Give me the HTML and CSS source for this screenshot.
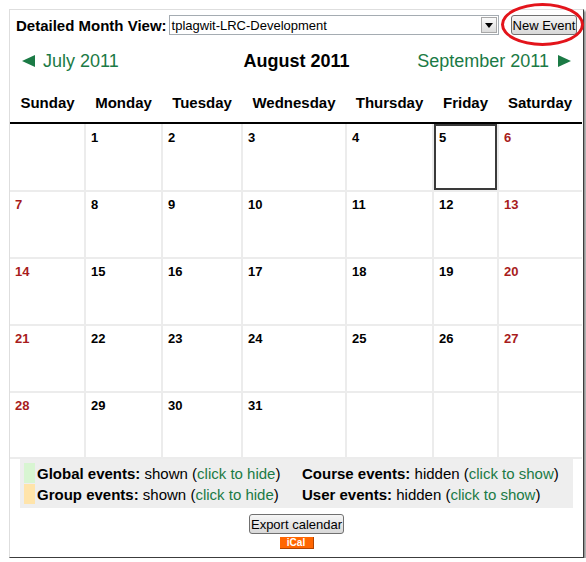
FILE: index.html
```html
<!DOCTYPE html>
<html>
<head>
<meta charset="utf-8">
<title>Calendar</title>
<link rel="stylesheet" href="styles.css">
</head>
<body>
<div class="frame">
  <div class="topbar">
    <span class="label">Detailed Month View:</span>
    <div class="select">
      <span class="select-text">tplagwit-LRC-Development</span>
      <span class="select-btn"><svg width="8" height="5" viewBox="0 0 8 5"><polygon points="0,0 8,0 4,5" fill="#000"/></svg></span>
    </div>
    <button class="btn new-event">New Event</button>
    <span class="annot"></span>
  </div>
  <div class="nav">
    <a class="prev" href="#"><svg width="13" height="12" viewBox="0 0 13 12"><polygon points="0,6 13,0 13,12" fill="#1b7a45"/></svg>July 2011</a>
    <h2 class="current">August 2011</h2>
    <a class="next" href="#">September 2011<svg width="13" height="12" viewBox="0 0 13 12"><polygon points="13,6 0,0 0,12" fill="#1b7a45"/></svg></a>
  </div>
  <table class="cal">
    <colgroup>
      <col class="c1"><col class="c2"><col class="c3"><col class="c4"><col class="c5"><col class="c6"><col class="c7">
    </colgroup>
    <thead>
      <tr><th>Sunday</th><th>Monday</th><th>Tuesday</th><th>Wednesday</th><th>Thursday</th><th>Friday</th><th>Saturday</th></tr>
    </thead>
    <tbody>
      <tr class="first"><td></td><td>1</td><td>2</td><td>3</td><td>4</td><td class="today">5</td><td class="we">6</td></tr>
      <tr><td class="we">7</td><td>8</td><td>9</td><td>10</td><td>11</td><td>12</td><td class="we">13</td></tr>
      <tr><td class="we">14</td><td>15</td><td>16</td><td>17</td><td>18</td><td>19</td><td class="we">20</td></tr>
      <tr><td class="we">21</td><td>22</td><td>23</td><td>24</td><td>25</td><td>26</td><td class="we">27</td></tr>
      <tr class="last"><td class="we">28</td><td>29</td><td>30</td><td>31</td><td></td><td></td><td></td></tr>
    </tbody>
  </table>
  <div class="legend">
    <div class="item"><span class="swatch global"></span><b>Global events:</b>&nbsp;shown (<a href="#">click to hide</a>)</div>
    <div class="item"><b>Course events:</b>&nbsp;hidden (<a href="#">click to show</a>)</div>
    <div class="item"><span class="swatch group"></span><b>Group events:</b>&nbsp;shown (<a href="#">click to hide</a>)</div>
    <div class="item"><b>User events:</b>&nbsp;hidden (<a href="#">click to show</a>)</div>
  </div>
  <div class="export">
    <button class="btn export-btn">Export calendar</button>
    <span class="ical">iCal</span>
  </div>
</div>
</body>
</html>
```

FILE: styles.css
```css
body {
  margin: 0;
  background: #fff;
  font-family: "Liberation Sans", Arial, sans-serif;
  color: #000;
}

a {
  color: #1b7a45;
  text-decoration: none;
}

.frame {
  position: relative;
  margin: 9px 0 0 9px;
  width: 573px;
  height: 547px;
  border-top: 1px solid #dedede;
  border-left: 1px solid #dedede;
  border-right: 1px solid #3c3c3c;
  border-bottom: 1px solid #3c3c3c;
  box-shadow: 2px 2px 2px rgba(0, 0, 0, 0.45);
}

.topbar {
  display: flex;
  align-items: center;
  height: 30px;
  padding-left: 6px;
}

.label {
  font-weight: bold;
  font-size: 15px;
  margin-right: 2px;
}

.select {
  width: 330px;
  height: 20px;
  box-sizing: border-box;
  border: 1px solid #a5acb2;
  display: flex;
  align-items: center;
  justify-content: space-between;
  padding-left: 2px;
  font-size: 13px;
}

.select-btn {
  width: 16px;
  height: 16px;
  margin-right: 1px;
  box-sizing: border-box;
  border: 1px solid #a8a8a8;
  background: linear-gradient(#fbfbfb, #dcdcdc);
  display: flex;
  align-items: center;
  justify-content: center;
}

.btn {
  font-family: "Liberation Sans", Arial, sans-serif;
  font-size: 13px;
  height: 20px;
  padding: 0 1px;
  border: 1px solid #707070;
  border-radius: 3px;
  background: linear-gradient(#f6f6f6, #d8d8d8);
  color: #000;
  white-space: nowrap;
}

.new-event {
  margin-left: 12px;
}

.annot {
  position: absolute;
  left: 491px;
  top: -7px;
  width: 77px;
  height: 37px;
  border: 3px solid #e3141b;
  border-radius: 50%;
}

.nav {
  display: grid;
  grid-template-columns: 1fr auto 1fr;
  align-items: center;
  height: 42px;
  padding: 0 12px;
  font-size: 18px;
}

.prev {
  justify-self: start;
  display: flex;
  align-items: center;
  gap: 8px;
}

.next {
  justify-self: end;
  display: flex;
  align-items: center;
  gap: 9px;
}

.current {
  margin: 0;
  font-size: 18px;
  font-weight: bold;
}

.cal {
  width: 572px;
  border-collapse: collapse;
  table-layout: fixed;
}

.c1 { width: 75px; }
.c2 { width: 77px; }
.c3 { width: 80px; }
.c4 { width: 104px; }
.c5 { width: 87px; }
.c6 { width: 65px; }
.c7 { width: 84px; }

.cal th {
  height: 40px;
  padding: 0;
  font-size: 15px;
  font-weight: bold;
  text-align: center;
  border-bottom: 2px solid #000;
}

.cal tbody tr {
  height: 67px;
}

.cal tbody tr.first {
  height: 68px;
}

.cal tbody tr.last {
  height: 66px;
}

.cal td {
  border: 2px solid #ececec;
  vertical-align: top;
  padding: 5px 5px;
  font-size: 13px;
  font-weight: bold;
}

.cal tr.first td {
  padding-top: 6px;
}

.cal td:first-child {
  border-left: none;
}

.cal td:last-child {
  border-right: none;
}

.cal td.we {
  color: #a81c1c;
}

.cal td.today {
  box-shadow: inset 0 0 0 2px #3a3a3a;
}

.legend {
  margin: 0 10px;
  padding: 4px 0 4px 4px;
  background: #eeeeee;
  display: grid;
  grid-template-columns: 278px auto;
  row-gap: 1px;
  font-size: 15px;
}

.item {
  display: flex;
  align-items: center;
  height: 20px;
  white-space: nowrap;
}

.swatch {
  width: 11px;
  height: 20px;
  margin-right: 2px;
}

.swatch.global {
  background: #d8f5d2;
}

.swatch.group {
  background: #ffe4aa;
}

.export {
  display: flex;
  flex-direction: column;
  align-items: center;
  padding-top: 6px;
  gap: 3px;
}

.export-btn {
  padding: 0 1px;
}

.ical {
  box-sizing: border-box;
  width: 34px;
  height: 12px;
  line-height: 11px;
  background: #ff6600;
  color: #fff;
  font-size: 10px;
  font-weight: bold;
  text-align: center;
  border-right: 1px solid #b04400;
  border-bottom: 1px solid #b04400;
}
```
